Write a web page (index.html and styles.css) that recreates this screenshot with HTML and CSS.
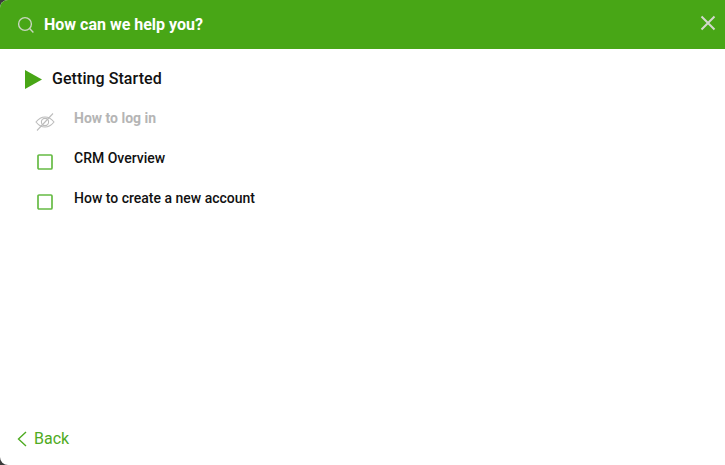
FILE: index.html
```html
<!DOCTYPE html>
<html lang="en">
<head>
<meta charset="utf-8">
<title>Help</title>
<link rel="stylesheet" href="styles.css">
</head>
<body>
<div class="panel">
  <header class="search-bar">
    <svg class="search-icon" width="18" height="18" viewBox="0 0 18 18" fill="none" stroke="#c9d6c0" stroke-width="1.4"><circle cx="8" cy="8" r="6.4"/><path d="M12.6 12.6 16.4 16.4"/></svg>
    <span class="search-text">How can we help you?</span>
    <svg class="close-icon" width="16" height="16" viewBox="0 0 16 16" fill="none" stroke="#d3d8cd" stroke-width="2"><path d="M1.500 1.500 14.500 14.500M14.500 1.500 1.500 14.500"/></svg>
  </header>
  <main class="content">
    <div class="section-title">
      <svg class="play-icon" width="17" height="19" viewBox="0 0 17 19"><path d="M0 0 17 9.500 0 19Z" fill="#48a616"/></svg>
      <span class="section-label">Getting Started</span>
    </div>
    <ul class="articles">
      <li class="article muted">
        <span class="article-icon"><svg class="eye-icon" width="20" height="20" viewBox="0 0 20 20" fill="none" stroke="#bcbcbc" stroke-width="1.1"><path d="M1 10C4 6.200 7 5 10 5s6 1.200 9 5c-3 3.800-6 5-9 5s-6-1.200-9-5Z"/><circle cx="10" cy="10" r="3.600"/><path d="M18 1.500 2 18.500"/></svg></span>
        <span class="article-label">How to log in</span>
      </li>
      <li class="article">
        <span class="article-icon"><svg class="box-icon" width="16" height="16" viewBox="0 0 16 16" fill="none" stroke="#66bb44" stroke-width="1.700"><rect x="1" y="1" width="14" height="14" rx="1"/></svg></span>
        <span class="article-label">CRM Overview</span>
      </li>
      <li class="article">
        <span class="article-icon"><svg class="box-icon" width="16" height="16" viewBox="0 0 16 16" fill="none" stroke="#66bb44" stroke-width="1.700"><rect x="1" y="1" width="14" height="14" rx="1"/></svg></span>
        <span class="article-label">How to create a new account</span>
      </li>
    </ul>
  </main>
  <footer class="footer">
    <svg width="10" height="16" viewBox="0 0 10 16" fill="none" stroke="#4fab22" stroke-width="1.400"><path d="M9 1 1.500 8 9 15"/></svg>
    <span>Back</span>
  </footer>
</div>
</body>
</html>
```
FILE: styles.css
```css
html, body { margin: 0; height: 100%; background: #3a3a3a; }
body { overflow: hidden; font-family: Roboto, "Liberation Sans", sans-serif; }
.panel {
  width: 725px; height: 465px; background: #fff; border-radius: 8px 0 0 8px;
  display: flex; flex-direction: column; overflow: hidden;
}
.search-bar {
  height: 49px; background: #48a616; display: flex; align-items: center;
  padding: 0 9px 0 17px; flex: none;
}
.search-icon { flex: none; }
.search-text { margin-left: 9px; color: #fff; font-weight: 700; font-size: 16px; flex: 1; }
.close-icon { flex: none; margin-top: -4px; }
.content { flex: 1; padding: 20px 0 0 25px; }
.section-title {
  display: flex; align-items: center; gap: 10px; height: 20px;
  font-size: 16px; font-weight: 500; color: #111;
}
.section-label { margin-top: -2px; letter-spacing: 0.07px; }
.articles { list-style: none; margin: 20px 0 0; padding: 0; }
.article { display: flex; height: 40px; font-size: 14px; font-weight: 500; color: #111; }
.article-icon { width: 40px; display: flex; justify-content: center; box-sizing: border-box; margin-right: 9px; }
.eye-icon { margin-top: 3px; }
.box-icon { margin-top: 5px; margin-left: -1px; }
.article-label { line-height: 20px; margin-top: -1px; }
.muted { color: #b5b5b5; font-weight: 700; }
.footer {
  height: 48px; flex: none; display: flex; align-items: center; gap: 7px;
  padding: 0 0 5px 17px; box-sizing: border-box; color: #4fab22; font-size: 16px;
}
```
